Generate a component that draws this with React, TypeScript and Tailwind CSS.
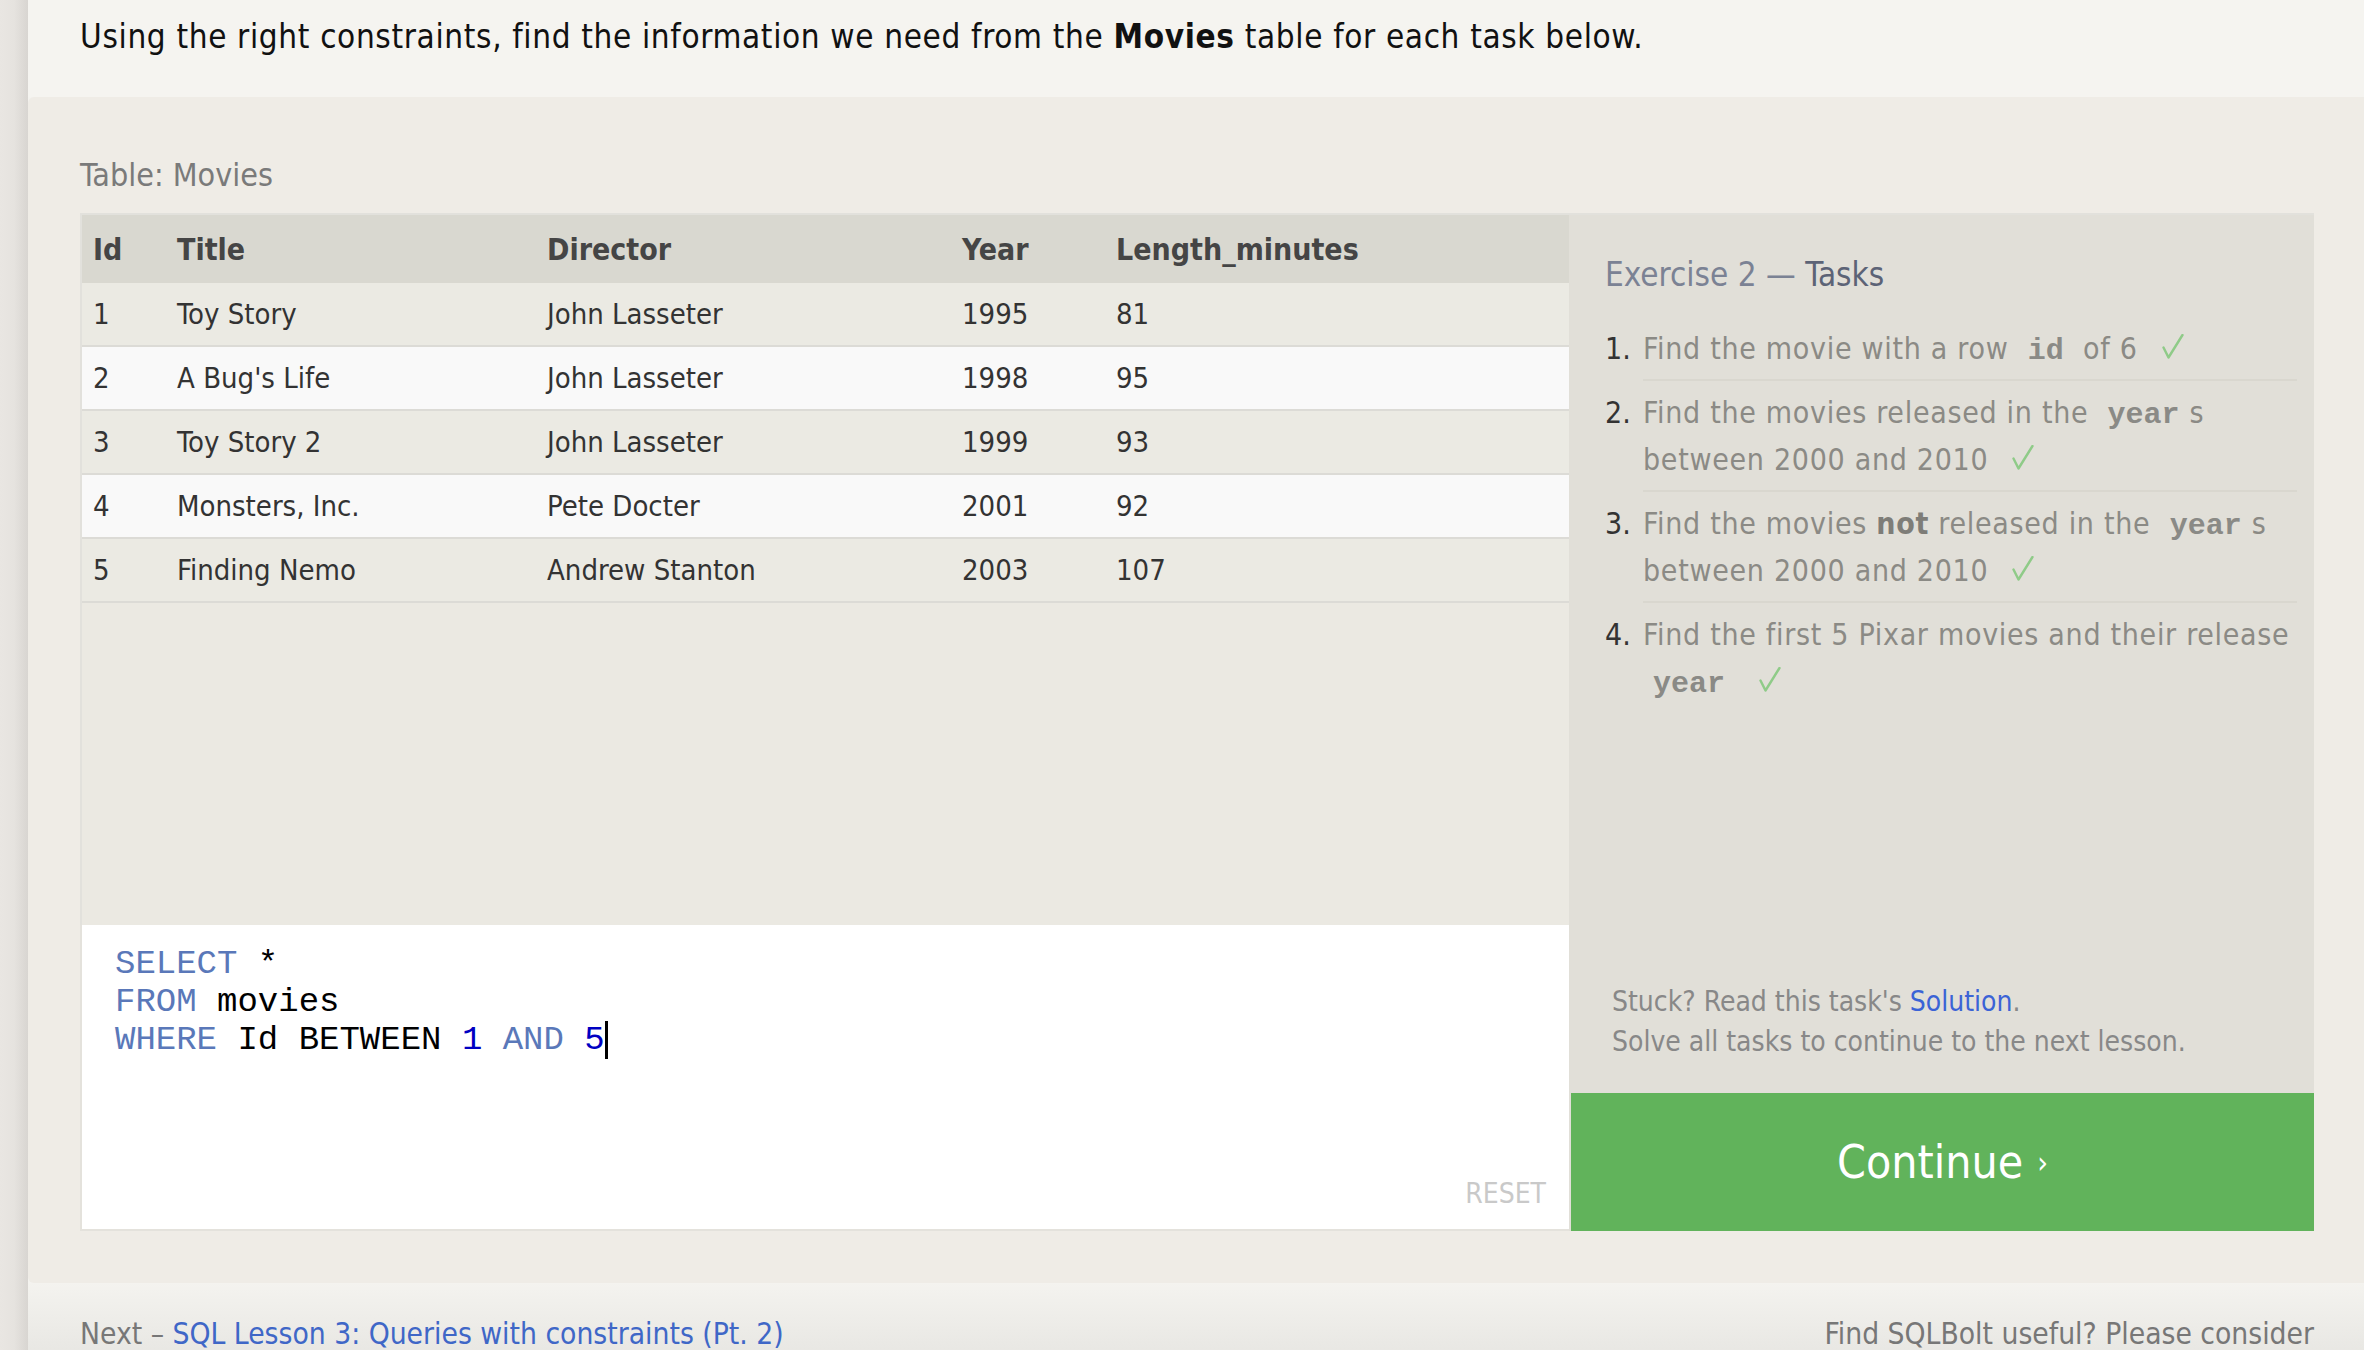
import React from "react";

const rows = [
  ["1", "Toy Story", "John Lasseter", "1995", "81"],
  ["2", "A Bug's Life", "John Lasseter", "1998", "95"],
  ["3", "Toy Story 2", "John Lasseter", "1999", "93"],
  ["4", "Monsters, Inc.", "Pete Docter", "2001", "92"],
  ["5", "Finding Nemo", "Andrew Stanton", "2003", "107"],
];

const cols = "grid grid-cols-[84px_370px_415px_154px_1fr]";

function Code({ children }: { children: React.ReactNode }) {
  return (
    <code className="font-['Liberation_Mono','Courier_New',monospace] font-bold text-[#8a8a86] px-[10px] leading-none tracking-normal">
      {children}
    </code>
  );
}

function Check() {
  return (
    <svg
      className="inline-block ml-[24px] align-baseline"
      width="22"
      height="25"
      viewBox="0 0 22 25"
      fill="none"
    >
      <path d="M1.5 13.5 L6.5 23.5 L20.5 1" stroke="#8fcb88" strokeWidth="2.4" strokeLinecap="round" strokeLinejoin="round" />
    </svg>
  );
}

function Task({ n, children, last }: { n: string; children: React.ReactNode; last?: boolean }) {
  return (
    <li className="flex">
      <span className="w-[38px] shrink-0 text-[#333333] pt-[8px] tracking-normal">{n}</span>
      <div
        className={
          "flex-1 pt-[8px] pb-[7px] text-[#8b8a85] whitespace-nowrap " +
          (last ? "" : "border-b-[2px] border-[#d9d7cf]")
        }
      >
        {children}
      </div>
    </li>
  );
}

export default function App() {
  return (
    <div className="flex w-[2364px] h-[1350px] overflow-hidden font-['DejaVu_Sans_Condensed','Liberation_Sans',sans-serif] bg-[#f4f3ef]">
      <div className="w-[28px] shrink-0 bg-gradient-to-r from-[#e9e6e2] via-[#e6e3df] to-[#d8d5d1]" />
      <div className="flex-1 flex flex-col min-w-0">
        <header className="h-[97px] shrink-0 bg-[#f5f4f0] pl-[52px] pt-[17px]">
          <p className="text-[33px] leading-[40px] tracking-[0.64px] text-[#111111] whitespace-nowrap">
            Using the right constraints, find the information we need from the{" "}
            <b className="font-bold">Movies</b> table for each task below.
          </p>
        </header>

        <main className="h-[1186px] shrink-0 bg-[#efece6] rounded-l-[6px] pl-[52px] pr-[50px] pt-[58px]">
          <p className="text-[32px] leading-[40px] text-[#7a7a7a] mb-[18px]">Table: Movies</p>

          <div className="flex border-t-[2px] border-[#e2e1dc]">
            {/* left column */}
            <div className="w-[1489px] shrink-0 flex flex-col">
              <div className="h-[710px] bg-[#ebe9e2] border-l-[2px] border-[#e2e1dc]">
                <div className={cols + " h-[68px] items-center bg-[#d9d8d0] text-[30px] font-bold text-[#454545]"}>
                  <div className="pl-[11px]">Id</div>
                  <div className="pl-[11px]">Title</div>
                  <div className="pl-[11px]">Director</div>
                  <div className="pl-[11px]">Year</div>
                  <div className="pl-[11px]">Length_minutes</div>
                </div>
                {rows.map((r, i) => (
                  <div
                    key={r[0]}
                    className={
                      cols +
                      " h-[64px] items-center border-b-[2px] border-[#dcdbd6] text-[29px] text-[#333333] pt-[2px] " +
                      (i % 2 === 1 ? "bg-[#f9f9f9]" : "bg-[#ebeae3]")
                    }
                  >
                    {r.map((c, j) => (
                      <div key={j} className="pl-[11px]">
                        {c}
                      </div>
                    ))}
                  </div>
                ))}
              </div>

              <div className="relative h-[306px] bg-white border-l-[2px] border-b-[2px] border-[#e4e2dc] pl-[33px] pt-[20px] font-['Liberation_Mono','Courier_New',monospace] text-[34px] leading-[38px] text-black">
                <div>
                  <span className="text-[#5a78b9]">SELECT</span> *
                </div>
                <div>
                  <span className="text-[#5a78b9]">FROM</span> movies
                </div>
                <div className="flex items-center">
                  <span>
                    <span className="text-[#5a78b9]">WHERE</span> Id BETWEEN{" "}
                    <span className="text-[#0000c2]">1</span>{" "}
                    <span className="text-[#5a78b9]">AND</span>{" "}
                    <span className="text-[#0000c2]">5</span>
                  </span>
                  <span className="inline-block w-[3px] h-[38px] bg-black" />
                </div>
                <span className="absolute right-[23px] bottom-[19px] font-['DejaVu_Sans_Condensed','Liberation_Sans',sans-serif] text-[28px] leading-[32px] text-[#c9c9c9]">
                  RESET
                </span>
              </div>
            </div>

            {/* right column */}
            <div className="w-[745px] shrink-0 flex flex-col bg-[#e1dfd8]">
              <div className="pl-[36px] pr-[17px] pt-[40px]">
                <h3 className="text-[33px] leading-[40px] text-[#7b8294]">
                  Exercise 2 — <span className="text-[#5c6376]">Tasks</span>
                </h3>
                <ol className="mt-[22px] text-[30px] leading-[47px] tracking-[0.7px]">
                  <Task n="1.">
                    Find the movie with a row <Code>id</Code> of 6
                    <Check />
                  </Task>
                  <Task n="2.">
                    Find the movies released in the <Code>year</Code>s
                    <br />
                    between 2000 and 2010
                    <Check />
                  </Task>
                  <Task n="3.">
                    Find the movies <b className="font-bold text-[#7e7d78]">not</b> released in the <Code>year</Code>s
                    <br />
                    between 2000 and 2010
                    <Check />
                  </Task>
                  <Task n="4." last>
                    Find the first 5 Pixar movies and their release
                    <br />
                    <Code>year</Code>
                    <Check />
                  </Task>
                </ol>
              </div>
              <div className="flex-1" />
              <div className="pl-[43px] text-[28px] leading-[40px] text-[#888888] mb-[31px]">
                <p>
                  Stuck? Read this task's <span className="text-[#3b63d6]">Solution</span>.
                </p>
                <p>Solve all tasks to continue to the next lesson.</p>
              </div>
              <div className="ml-[2px] h-[138px] bg-[#61b35b] flex items-center justify-center text-white">
                <span className="text-[46px] leading-[56px]">Continue</span>
                <span className="text-[30px] ml-[14px]">›</span>
              </div>
            </div>
          </div>
        </main>

        <footer className="flex-1 bg-gradient-to-b from-[#f4f3ef] to-[#e8e7e3] pl-[52px] pr-[50px] pt-[31px] flex justify-between text-[29.7px] leading-[40px] text-[#777777] whitespace-nowrap">
          <span>
            Next – <span className="text-[#3f67c7]">SQL Lesson 3: Queries with constraints (Pt. 2)</span>
          </span>
          <span>Find SQLBolt useful? Please consider</span>
        </footer>
      </div>
    </div>
  );
}
